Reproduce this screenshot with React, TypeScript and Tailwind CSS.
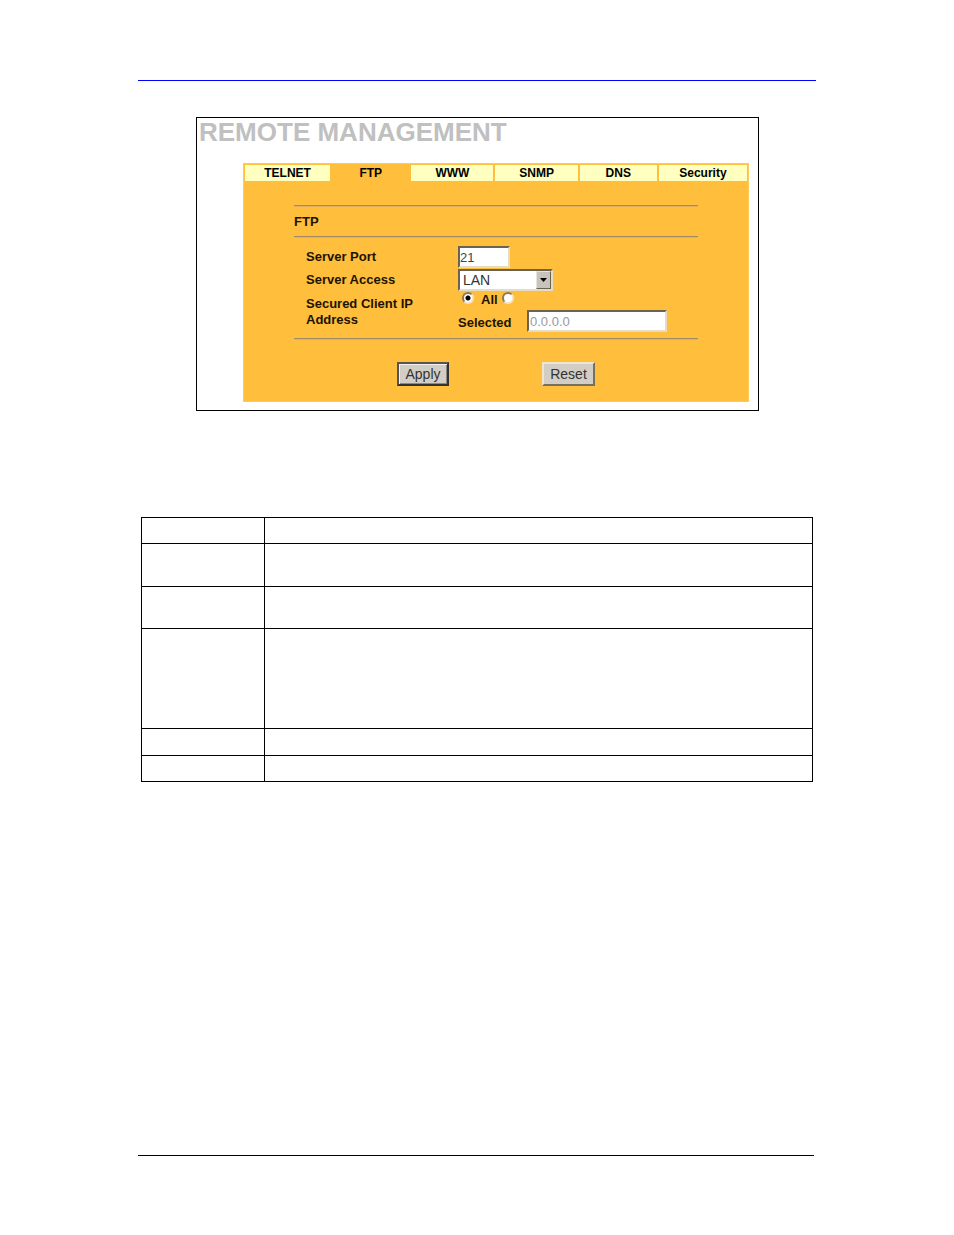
const tabs = ["TELNET", "FTP", "WWW", "SNMP", "DNS", "Security"];

const rowHeights = [
  "h-[26px]",
  "h-[43px]",
  "h-[42px]",
  "h-[100px]",
  "h-[27px]",
  "h-[26px]",
];

const sunken =
  "border-2 border-t-[#6b6250] border-l-[#6b6250] border-r-[#e6dcc4] border-b-[#e6dcc4] bg-white";

const radio =
  "size-3 appearance-none rounded-full border-2 border-t-[#8a7a5c] border-l-[#8a7a5c] border-r-[#f3e6c8] border-b-[#f3e6c8] bg-white checked:bg-[radial-gradient(circle,#000_2px,#fff_3px)]";

function Rule() {
  return <hr className="h-0.5 border-t border-[#a08a68] bg-[#e0b060]" />;
}

export default function App() {
  return (
    <main className="bg-white px-[138px] pt-20 font-['Liberation_Sans',Arial,sans-serif] text-black">
      <hr className="border-[#0000ff]" />

      {/* Remote management screen */}
      <section className="mt-9 mr-[57px] ml-[58px] border border-black pr-[9px] pb-2 pl-[46px]">
        <h1 className="-ml-11 text-[26px] leading-7 font-bold whitespace-nowrap text-[#c0c0c0]">
          REMOTE MANAGEMENT
        </h1>

        <div className="mt-[17px] border border-[#ffc95c] bg-[#ffbe3c] pb-[15px]">
          <nav className="grid grid-cols-[85fr_77fr_82fr_82fr_77fr_88fr] gap-0.5 px-px pt-px text-center text-[12px] leading-4 font-bold">
            {tabs.map((tab) => (
              <a
                key={tab}
                href={"#" + tab.toLowerCase()}
                className={tab === "FTP" ? "" : "bg-[#ffffc0]"}
              >
                {tab}
              </a>
            ))}
          </nav>

          <form className="mt-6 px-[50px] text-[13px] leading-4 font-bold text-[#1c1400]">
            <Rule />
            <h2 className="pt-[7px] pb-1.5">FTP</h2>
            <Rule />

            <div className="mt-2 mb-1.5 grid grid-cols-[152px_1fr] gap-y-px pl-3">
              <label htmlFor="port" className="pt-[3px]">
                Server Port
              </label>
              <input
                id="port"
                defaultValue="21"
                className={sunken + " h-[22px] w-[52px] text-[13px] font-normal text-[#444]"}
              />

              <label htmlFor="access" className="pt-[3px]">
                Server Access
              </label>
              <div className="relative w-[95px]">
                <select
                  id="access"
                  className={
                    sunken + " block h-[22px] w-full appearance-none pl-[3px] text-[14px] leading-4 font-normal text-[#333]"
                  }
                >
                  <option>LAN</option>
                </select>
                <span className="pointer-events-none absolute top-0.5 right-0.5 flex h-[18px] w-[15px] items-center justify-center border border-t-[#e8e4da] border-r-[#6b6250] border-b-[#6b6250] border-l-[#e8e4da] bg-[#c8c4bc]">
                  <svg width="7" height="4" viewBox="0 0 7 4">
                    <path d="M0 0h7L3.5 4z" fill="#000" />
                  </svg>
                </span>
              </div>

              <div className="pt-1">Secured Client IP Address</div>
              <div>
                <div className="flex h-[18px] items-start pl-1">
                  <input id="all" type="radio" name="client" defaultChecked className={radio} />
                  <label htmlFor="all" className="mr-1 ml-[7px]">
                    All
                  </label>
                  <input id="selected" type="radio" name="client" className={radio} />
                </div>
                <div className="flex items-center">
                  <label htmlFor="selected" className="w-[69px] pt-1">
                    Selected
                  </label>
                  <input
                    aria-label="Selected client IP address"
                    defaultValue="0.0.0.0"
                    disabled
                    className={sunken + " h-[22px] w-[140px] pl-px text-[13px] font-normal text-[#999]"}
                  />
                </div>
              </div>
            </div>
            <Rule />

            <div className="mt-[22px] flex justify-center gap-[93px] text-[14px] font-normal text-[#333]">
              <button
                type="button"
                className="h-6 w-[52px] border-2 border-t-[#555] border-r-[#333] border-b-[#333] border-l-[#555] bg-[#d2cec6] shadow-[inset_1px_1px_#f4f1ea,inset_-1px_-1px_#8c8880]"
              >
                Apply
              </button>
              <button
                type="reset"
                className="h-6 w-[53px] border-2 border-t-[#efe6d0] border-r-[#77705f] border-b-[#77705f] border-l-[#efe6d0] bg-[#d2cec6]"
              >
                Reset
              </button>
            </div>
          </form>
        </div>
      </section>

      {/* Field descriptions */}
      <div className="mx-[3px] mt-[106px]">
        <table className="w-full table-fixed border-collapse border border-black">
          <colgroup>
            <col className="w-[123px]" />
            <col />
          </colgroup>
          <tbody>
            {rowHeights.map((height, i) => (
              <tr key={i} className={height}>
                <td className="border border-black" />
                <td className="border border-black" />
              </tr>
            ))}
          </tbody>
        </table>
      </div>

      <footer className="mt-[373px] mr-0.5 border-t border-black pb-16" />
    </main>
  );
}
